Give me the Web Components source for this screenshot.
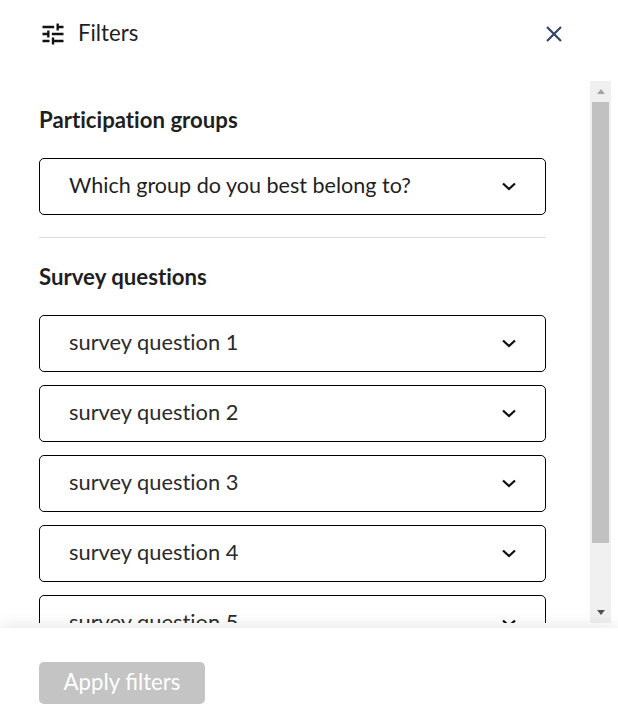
<!DOCTYPE html>
<html lang="en">
<head>
<meta charset="utf-8">
<title>Filters</title>
<style>
  html, body { margin: 0; height: 100%; background: #fff; overflow: hidden; }
  body { font-family: "Lato", "Liberation Sans", sans-serif; color: #1f1f1f; }
  .groups { --select-size: 21.55px; }
  .questions { --select-size: 21.85px; --select-color: #2b2b2b; }
</style>
</head>
<body>
<filter-panel>
  <filter-section class="groups" heading="Participation groups" divided>
    <select-box>Which group do you best belong to?</select-box>
  </filter-section>
  <filter-section class="questions" heading="Survey questions">
    <select-box>survey question 1</select-box>
    <select-box>survey question 2</select-box>
    <select-box>survey question 3</select-box>
    <select-box>survey question 4</select-box>
    <select-box>survey question 5</select-box>
  </filter-section>
</filter-panel>

<script>
class filterPanel extends HTMLElement {
    constructor () {
        super();
        this.attachShadow({ mode: 'open' });

        this.shadowRoot.innerHTML = `
            <style>
                :host {
                    display: flex;
                    flex-direction: column;
                    height: 722px;
                    width: 618px;
                    overflow: hidden;
                }

                .top {
                    height: 81px;
                    flex: none;
                    display: flex;
                    align-items: flex-start;
                    padding: 21px 55px 0 39px;
                    box-sizing: border-box;
                    font-size: 22.2px;
                    line-height: 23px;
                }

                .top .title { margin-left: 11px; flex: 1; }
                .top svg { display: block; flex: none; }

                .middle {
                    height: 542px;
                    flex: none;
                    display: flex;
                    overflow: hidden;
                }

                .content {
                    width: 507px;
                    margin-left: 39px;
                    margin-right: 44px;
                    flex: none;
                }

                .gap { height: 5px; flex: none; }

                .bottom {
                    flex: 1;
                    position: relative;
                    background: #fff;
                    padding: 34px 0 0 39px;
                    box-shadow: 0 -3px 14px rgba(0, 0, 0, .09);
                }

                button {
                    display: block;
                    width: 166px;
                    height: 42px;
                    padding: 0 0 2px;
                    border: 0;
                    border-radius: 5px;
                    background: #c4c4c4;
                    color: #fff;
                    font: 400 22.2px/40px "Lato", "Liberation Sans", sans-serif;
                }
            </style>

            <div class="top">
                <svg width="28" height="28" viewBox="0 0 24 24" fill="#111" style="margin-top:-1px">
                    <path d="M3 17v2h6v-2H3zM3 5v2h10V5H3zm10 16v-2h8v-2h-8v-2h-2v6h2zM7 9v2H3v2h4v2h2V9H7zm14 4v-2H11v2h10zm-6-4h2V7h4V5h-4V3h-2v6z"/>
                </svg>
                <span class="title">Filters</span>
                <svg width="18" height="18" viewBox="0 0 18 18" fill="none" stroke="#34456b" stroke-width="2.200" style="margin-top:4px">
                    <path d="M2 2l14 14M16 2L2 16"/>
                </svg>
            </div>
            <div class="middle">
                <div class="content"><slot></slot></div>
                <fake-scrollbar></fake-scrollbar>
            </div>
            <div class="gap"></div>
            <div class="bottom"><button type="button">Apply filters</button></div>
        `;
    }
}

class filterSection extends HTMLElement {
    constructor () {
        super();
        this.attachShadow({ mode: 'open' });

        this.shadowRoot.innerHTML = `
            <style>
                :host { display: block; }
                :host([divided]) { border-bottom: 1px solid #dcdcdc; height: 156px; }
                h2 {
                    margin: 0;
                    padding: 25px 0 25px;
                    height: 27px;
                    font-size: 22.2px;
                    line-height: 28px;
                    font-weight: 700;
                    font-variant-ligatures: none;
                }
                .rows { display: flex; flex-direction: column; gap: 13px; }
            </style>
            <h2></h2>
            <div class="rows"><slot></slot></div>
        `;
    }
    connectedCallback() {
        this.shadowRoot.querySelector('h2').textContent = this.getAttribute('heading');
    }
}

class selectBox extends HTMLElement {
    constructor () {
        super();
        this.attachShadow({ mode: 'open' });

        this.shadowRoot.innerHTML = `
            <style>
                :host {
                    display: flex;
                    align-items: center;
                    justify-content: space-between;
                    flex: none;
                    box-sizing: border-box;
                    height: 57px;
                    padding: 0 29px;
                    border: 1px solid #000;
                    border-radius: 5px;
                    background: #fff;
                    font-size: var(--select-size, 21.6px);
                    color: var(--select-color, #1f1f1f);
                    font-variant-ligatures: none;
                }
                span { display: block; padding-bottom: 4px; }
                svg { display: block; flex: none; }
            </style>
            <span><slot></slot></span>
            <svg width="14" height="9" viewBox="0 0 14 9" fill="none" stroke="#111" stroke-width="2.300">
                <path d="M1 1.500l6 5.500 6-5.500"/>
            </svg>
        `;
    }
}

class fakeScrollbar extends HTMLElement {
    constructor () {
        super();
        this.attachShadow({ mode: 'open' });

        this.shadowRoot.innerHTML = `
            <style>
                :host {
                    display: flex;
                    flex-direction: column;
                    align-items: center;
                    width: 21px;
                    height: 100%;
                    flex: none;
                    background: #f0f0f0;
                }
                .btn { height: 21px; flex: none; display: flex; align-items: center; justify-content: center; }
                .up { border: 4.500px solid transparent; border-top: 0; border-bottom: 5px solid #a3a3a3; width: 0; height: 0; }
                .down { border: 4.500px solid transparent; border-bottom: 0; border-top: 5px solid #505050; width: 0; height: 0; }
                .thumb { width: 17px; height: 441px; flex: none; background: #c1c1c1; }
                .fill { flex: 1; }
            </style>
            <div class="btn"><div class="up"></div></div>
            <div class="thumb"></div>
            <div class="fill"></div>
            <div class="btn"><div class="down"></div></div>
        `;
    }
}

customElements.define('filter-panel', filterPanel);
customElements.define('filter-section', filterSection);
customElements.define('select-box', selectBox);
customElements.define('fake-scrollbar', fakeScrollbar);
</script>
</body>
</html>
